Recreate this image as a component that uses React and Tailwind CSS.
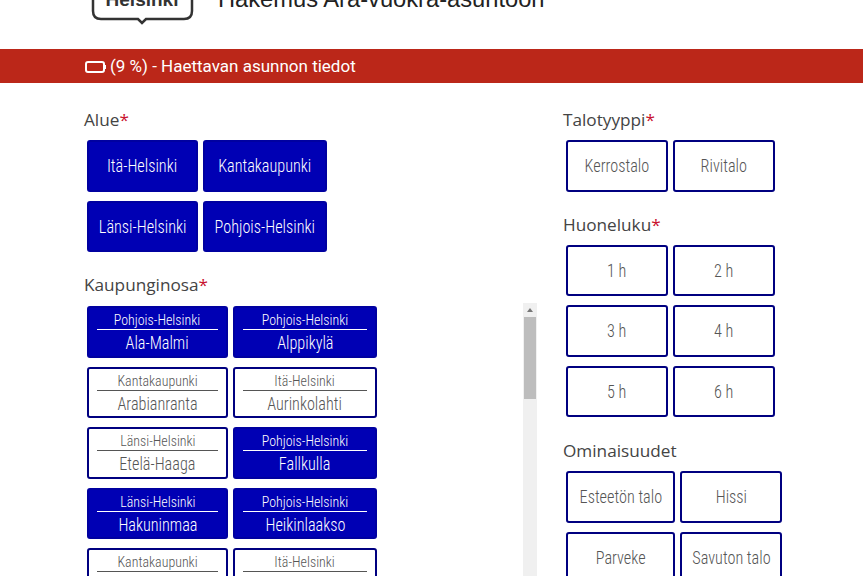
const NARROW = "font-['Roboto_Condensed','Liberation_Sans_Narrow','Roboto',sans-serif] font-light";

const alueet = [
  { label: 'Itä-Helsinki', on: true },
  { label: 'Kantakaupunki', on: true },
  { label: 'Länsi-Helsinki', on: true },
  { label: 'Pohjois-Helsinki', on: true },
];

const osat = [
  { area: 'Pohjois-Helsinki', name: 'Ala-Malmi', on: true },
  { area: 'Pohjois-Helsinki', name: 'Alppikylä', on: true },
  { area: 'Kantakaupunki', name: 'Arabianranta' },
  { area: 'Itä-Helsinki', name: 'Aurinkolahti' },
  { area: 'Länsi-Helsinki', name: 'Etelä-Haaga' },
  { area: 'Pohjois-Helsinki', name: 'Fallkulla', on: true },
  { area: 'Länsi-Helsinki', name: 'Hakuninmaa', on: true },
  { area: 'Pohjois-Helsinki', name: 'Heikinlaakso', on: true },
  { area: 'Kantakaupunki', name: 'Hermanni' },
  { area: 'Itä-Helsinki', name: 'Herttoniemi' },
];

function Label({ text, required }) {
  return (
    <div className="h-[24px] pt-[2px] font-['Open_Sans',sans-serif] text-[17.2px] leading-[22px] text-[#444]">
      {text}
      {required && <span className="text-[#c8102e]">*</span>}
    </div>
  );
}

function Choice({ label, on }) {
  return (
    <div
      className={`flex h-[51.5px] items-center justify-center rounded-[3px] border-2 text-[18px] ${NARROW} ${
        on ? 'border-[#0000a0] bg-[#0000b4] text-white' : 'border-[#000080] bg-white text-[#555]'
      }`}
    >
      <span className="inline-block [transform:scaleX(0.9)] whitespace-nowrap">{label}</span>
    </div>
  );
}

function AreaChoice({ area, name, on }) {
  return (
    <div
      className={`flex h-[51.5px] flex-col items-center rounded-[3px] border-2 px-[8px] pt-[4px] ${NARROW} ${
        on ? 'border-[#0000a0] bg-[#0000b4] text-white' : 'border-[#000080] bg-white text-[#555]'
      }`}
    >
      <div className="[transform:scaleX(0.9)] text-[15.5px] leading-[17px] whitespace-nowrap">{area}</div>
      <div className={`h-px w-full shrink-0 ${on ? 'bg-white' : 'bg-[#555]'}`} />
      <div className="mt-[2px] [transform:scaleX(0.9)] text-[18px] leading-[22px] whitespace-nowrap">{name}</div>
    </div>
  );
}

export default function App() {
  return (
    <div className="h-screen overflow-hidden bg-white">
      <header className="flex h-[49px] items-end overflow-hidden pl-[92px]">
        <svg width="102" height="28" viewBox="0 0 102 28" className="mb-[23px] shrink-0 overflow-visible">
          <path
            d="M1 -20 V13 Q1 21 9 21 H46 L50 25 L54 21 H92 Q100 21 100 13 V-20"
            fill="none"
            stroke="#333"
            strokeWidth="2.5"
          />
          <text x="50" y="8" textAnchor="middle" fontFamily="Liberation Sans" fontWeight="700" fontSize="19" fill="#333">
            Helsinki
          </text>
        </svg>
        <h1 className="mb-[36px] ml-[24px] font-['Liberation_Sans',sans-serif] text-[23.7px] leading-[28px] whitespace-nowrap text-[#222]">
          Hakemus Ara-vuokra-asuntoon
        </h1>
      </header>

      <div className="flex h-[34px] items-center gap-[4px] bg-[#bb2719] pt-px pl-[85px] font-['Roboto',sans-serif] text-[17px] text-white">
        <svg width="21" height="12" viewBox="0 0 21 12" fill="none">
          <rect x="1" y="1" width="18" height="10" rx="2" stroke="white" strokeWidth="2" />
          <rect x="19.5" y="4" width="1.5" height="4" fill="white" />
        </svg>
        <span>(9 %) - Haettavan asunnon tiedot</span>
      </div>

      <main className="flex pt-[24px]">
        <section className="w-[537px] shrink-0 pl-[84px]">
          <Label text="Alue" required />
          <div className="mt-[9px] ml-[3px] grid grid-cols-[111px_124px] gap-x-[5px] gap-y-[9px]">
            {alueet.map((a) => (
              <Choice key={a.label} label={a.label} on={a.on} />
            ))}
          </div>

          <div className="mt-[20px]">
            <Label text="Kaupunginosa" required />
          </div>
          <div className="mt-[7px] flex items-start">
            <div className="ml-[3px] grid w-[436px] grid-cols-[141px_144px] gap-x-[5px] gap-y-[9px] pt-[3px]">
              {osat.map((o) => (
                <AreaChoice key={o.name} area={o.area} name={o.name} on={o.on} />
              ))}
            </div>
            <div className="flex h-[400px] w-[14px] shrink-0 flex-col items-center bg-[#f0f0f0]">
              <div className="mt-[5px] h-0 w-0 border-x-[3px] border-b-[4px] border-x-transparent border-b-[#777]" />
              <div className="mt-[5px] h-[82px] w-[12px] bg-[#bdbdbd]" />
            </div>
          </div>
        </section>

        <section className="pl-[26px]">
          <Label text="Talotyyppi" required />
          <div className="mt-[9px] ml-[3px] grid grid-cols-[102px_102px] gap-x-[5px]">
            <Choice label="Kerrostalo" />
            <Choice label="Rivitalo" />
          </div>

          <div className="mt-[20px]">
            <Label text="Huoneluku" required />
          </div>
          <div className="mt-[9px] ml-[3px] grid grid-cols-[102px_102px] gap-x-[5px] gap-y-[9px]">
            {['1 h', '2 h', '3 h', '4 h', '5 h', '6 h'].map((h) => (
              <Choice key={h} label={h} />
            ))}
          </div>

          <div className="mt-[21px]">
            <Label text="Ominaisuudet" />
          </div>
          <div className="mt-[9px] ml-[3px] grid grid-cols-[109px_102px] gap-x-[5px] gap-y-[9px]">
            {['Esteetön talo', 'Hissi', 'Parveke', 'Savuton talo'].map((h) => (
              <Choice key={h} label={h} />
            ))}
          </div>
        </section>
      </main>
    </div>
  );
}
